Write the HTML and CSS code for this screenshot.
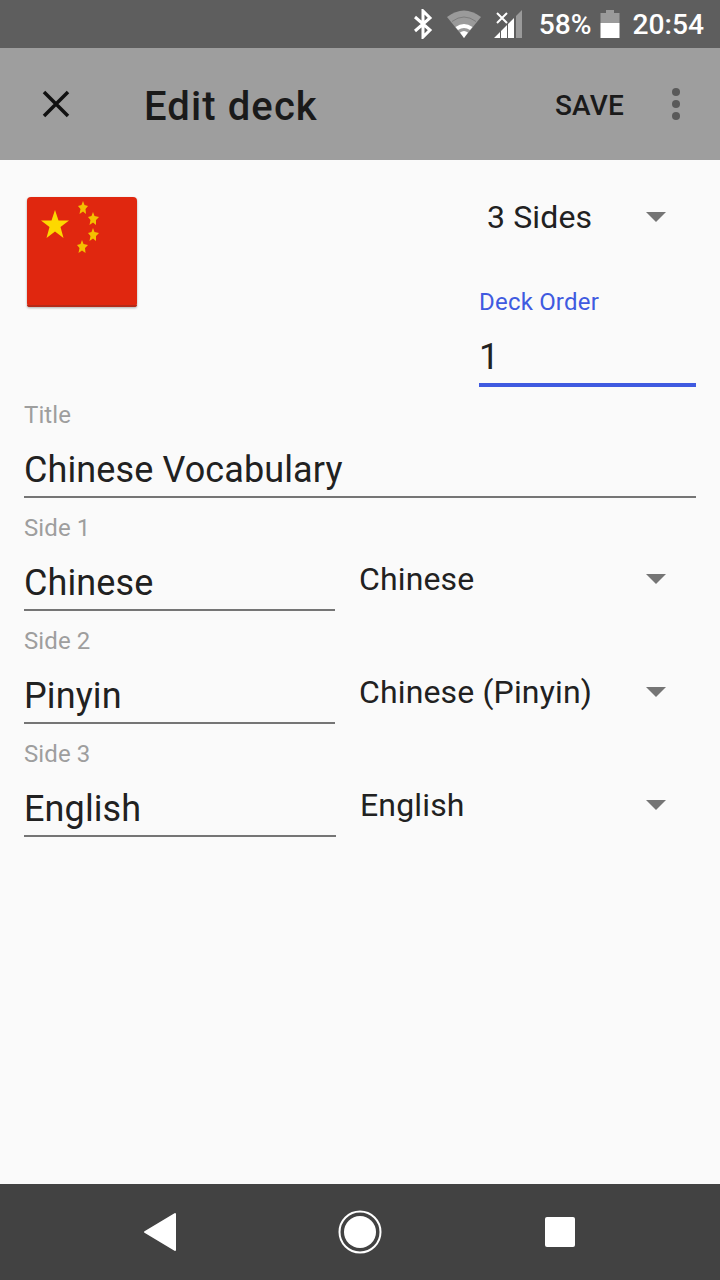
FILE: index.html
```html
<!DOCTYPE html>
<html lang="en">
<head>
    <meta charset="UTF-8">
    <meta name="viewport" content="width=device-width, initial-scale=1.0">
    <title>Edit deck</title>
    <link rel="stylesheet" href="styles.css">
</head>
<body>

    <div class="screen">
        <div class="status-bar">
            <svg class="icon-bt" width="20" height="30" viewBox="0 0 20 30">
                <path d="M2 8 L17 21 L10 28 L10 2 L17 9 L2 22" fill="none" stroke="#fff" stroke-width="3"/>
            </svg>
            <svg class="icon-wifi" width="34" height="30" viewBox="0 0 34 30">
                <path d="M0 8 Q17 -5 34 8 L17 29 Z" fill="#9a9a9a"/>
                <path d="M5 12.500 Q17 3.500 29 12.500" fill="none" stroke="#5e5e5e" stroke-opacity="0.5" stroke-width="1"/>
                <path d="M8.500 18 Q17 12 25.500 18 L23 21 Q17 17 11 21 Z" fill="#fff"/>
                <path d="M13 23.500 Q17 20.500 21 23.500 L17 29 Z" fill="#fff"/>
            </svg>
            <svg class="icon-signal" width="28" height="28" viewBox="0 0 28 28">
                <path d="M3 3 L13 13 M13 3 L3 13" stroke="#fff" stroke-width="2" fill="none"/>
                <path d="M0 28 L6 28 L6 22 Z M7 28 L13 28 L13 15 L7 21 Z M14 28 L20 28 L20 8 L14 14 Z" fill="#fff"/>
                <path d="M22 28 L28 28 L28 0 L22 6 Z" fill="#9a9a9a"/>
            </svg>
            <span class="status-text">58%</span>
            <svg class="icon-battery" width="20" height="30" viewBox="0 0 20 30">
                <path d="M6 1 H14 V4 H19.500 V14 H0.500 V4 H6 Z" fill="#9a9a9a"/>
                <rect x="0.500" y="14" width="19" height="15" fill="#fff"/>
            </svg>
            <span class="status-text time">20:54</span>
        </div>

        <div class="toolbar">
            <svg class="icon-close" width="28" height="28" viewBox="0 0 28 28">
                <path d="M2 2 L26 26 M26 2 L2 26" stroke="#111" stroke-width="3.500" fill="none"/>
            </svg>
            <h1 class="toolbar-title">Edit deck</h1>
            <span class="toolbar-save">SAVE</span>
            <div class="overflow">
                <span></span><span></span><span></span>
            </div>
        </div>

        <div class="content">
            <div class="top-row">
                <svg class="flag" width="112" height="112" viewBox="0 0 112 112">
                    <defs>
                        <filter id="soft"><feGaussianBlur stdDeviation="0.6"/></filter>
                    </defs>
                    <rect x="1" y="1" width="110" height="110" rx="4" fill="#e0270f"/>
                    <path d="M1 109 H111 Q111 111 108 111 H4 Q1 111 1 109 Z" fill="#b52a18"/>
                    <g filter="url(#soft)">
                        <polygon points="29,14 32.5,24.5 43,24.500 34.5,31 37.5,42 29,35.5 20.500,42 23.500,31 15,24.500 25.500,24.500" fill="#fdd800"/>
                        <polygon points="57,5 58.500,9 62,10 59.500,13 60,18 57,15.500 53.500,18 54.500,13 52,10 55.500,9" fill="#f4c000"/>
                        <polygon points="67,16 68.500,20 73,21 70,24 70,29 67,26.500 63.500,29 64.500,24 62,21 65.500,20" fill="#f4c000"/>
                        <polygon points="67,32 68.500,36 73,37 70,40 70,45 67,42.500 63.500,45 64.500,40 62,37 65.500,36" fill="#f4c000"/>
                        <polygon points="56,44 57.500,48 62,49 59,52 59.500,57 56,54.500 52.500,57 53.500,52 51,49 54.500,48" fill="#f4c000"/>
                    </g>
                </svg>
                <div class="top-right">
                    <div class="spinner sides">
                        <span>3 Sides</span>
                        <i class="caret"></i>
                    </div>
                    <label class="order-label">Deck Order</label>
                    <div class="order-value">1</div>
                </div>
            </div>

            <div class="field">
                <label>Title</label>
                <div class="value">Chinese Vocabulary</div>
            </div>

            <div class="side-row">
                <div class="field">
                    <label>Side 1</label>
                    <div class="value">Chinese</div>
                </div>
                <div class="spinner lang">
                    <span>Chinese</span>
                    <i class="caret"></i>
                </div>
            </div>

            <div class="side-row">
                <div class="field">
                    <label>Side 2</label>
                    <div class="value">Pinyin</div>
                </div>
                <div class="spinner lang">
                    <span>Chinese (Pinyin)</span>
                    <i class="caret"></i>
                </div>
            </div>

            <div class="side-row last">
                <div class="field">
                    <label>Side 3</label>
                    <div class="value">English</div>
                </div>
                <div class="spinner lang">
                    <span>English</span>
                    <i class="caret"></i>
                </div>
            </div>
        </div>

        <div class="nav-bar">
            <svg width="36" height="40" viewBox="0 0 36 40">
                <path d="M33 2 V38 L3 20 Z" fill="#fff" stroke="#fff" stroke-width="2" stroke-linejoin="round"/>
            </svg>
            <svg width="44" height="44" viewBox="0 0 44 44">
                <circle cx="22" cy="22" r="20.500" fill="none" stroke="#fff" stroke-width="2"/>
                <circle cx="22" cy="22" r="16" fill="#fff"/>
            </svg>
            <svg width="30" height="30" viewBox="0 0 30 30">
                <rect width="30" height="30" rx="2" fill="#fff"/>
            </svg>
        </div>
    </div>

</body>
</html>
```

FILE: styles.css
```css
* {
    box-sizing: border-box;
}

body {
    margin: 0;
    padding: 0;
    font-family: Roboto, sans-serif;
    color: #212121;
    background-color: #fafafa;
}

.screen {
    width: 720px;
    height: 1280px;
    display: flex;
    flex-direction: column;
}

/* Status bar */
.status-bar {
    height: 48px;
    background-color: #5e5e5e;
    display: flex;
    align-items: center;
    justify-content: flex-end;
    padding-right: 16px;
    color: #fff;
}

.icon-bt {
    margin-right: 14px;
}

.icon-wifi {
    margin-right: 13px;
}

.icon-signal {
    margin-right: 17px;
}

.icon-battery {
    margin-left: 9px;
    margin-right: 12px;
}

.status-text {
    font-size: 28.200px;
    font-weight: 500;
}

/* Toolbar */
.toolbar {
    height: 112px;
    background-color: #9e9e9e;
    display: flex;
    align-items: center;
    padding-left: 42px;
}

.toolbar-title {
    margin: 4px 0 0 74px;
    font-size: 40px;
    font-weight: 500;
    letter-spacing: 1.100px;
    color: #1a1a1a;
    flex: 1;
}

.toolbar-save {
    font-size: 28px;
    font-weight: 500;
    letter-spacing: 0.2px;
    color: #1a1a1a;
    margin-top: 2px;
}

.overflow {
    width: 96px;
    padding-left: 8px;
    display: flex;
    flex-direction: column;
    align-items: center;
    gap: 4px;
}

.overflow span {
    width: 8px;
    height: 8px;
    border-radius: 50%;
    background-color: #5a5a5a;
}

/* Content */
.content {
    flex: 1;
    padding: 0 24px;
}

.top-row {
    height: 228px;
    display: flex;
    justify-content: space-between;
    padding-top: 36px;
}

.flag {
    margin-left: 2px;
    filter: drop-shadow(0 1px 1px rgba(0, 0, 0, 0.3));
}

.top-right {
    width: 217px;
}

.spinner {
    display: flex;
    align-items: center;
    justify-content: space-between;
    padding-right: 30px;
}

.spinner span {
    font-size: 32px;
    letter-spacing: 0.15px;
}

.sides {
    height: 42px;
    padding-left: 8px;
}

.caret {
    width: 0;
    height: 0;
    border-left: 10px solid transparent;
    border-right: 10px solid transparent;
    border-top: 10px solid #757575;
}

.order-label {
    display: block;
    margin-top: 50px;
    font-size: 24px;
    line-height: 28px;
    letter-spacing: 0.2px;
    color: #3f5ae0;
}

.order-value {
    margin-top: 20px;
    height: 51px;
    font-size: 36px;
    line-height: 42px;
    border-bottom: 4px solid #3f5ae0;
}

.field label {
    display: block;
    font-size: 24px;
    line-height: 28px;
    letter-spacing: 0.1px;
    color: #9e9e9e;
}

.field .value {
    margin-top: 20px;
    height: 49px;
    font-size: 36px;
    line-height: 42px;
    letter-spacing: 0.11px;
    border-bottom: 2px solid #757575;
}

.field {
    height: 113px;
    padding-top: 13px;
}

.side-row {
    display: flex;
}

.side-row .field {
    width: 311px;
}

.side-row.last .field {
    width: 312px;
}

.lang {
    flex: 1;
    height: 113px;
    padding-left: 24px;
    padding-top: 42px;
}

/* Nav bar */
.nav-bar {
    height: 96px;
    background-color: #424242;
    display: grid;
    grid-template-columns: repeat(3, 200px);
    justify-items: center;
    align-items: center;
    padding: 0 60px;
}
```
